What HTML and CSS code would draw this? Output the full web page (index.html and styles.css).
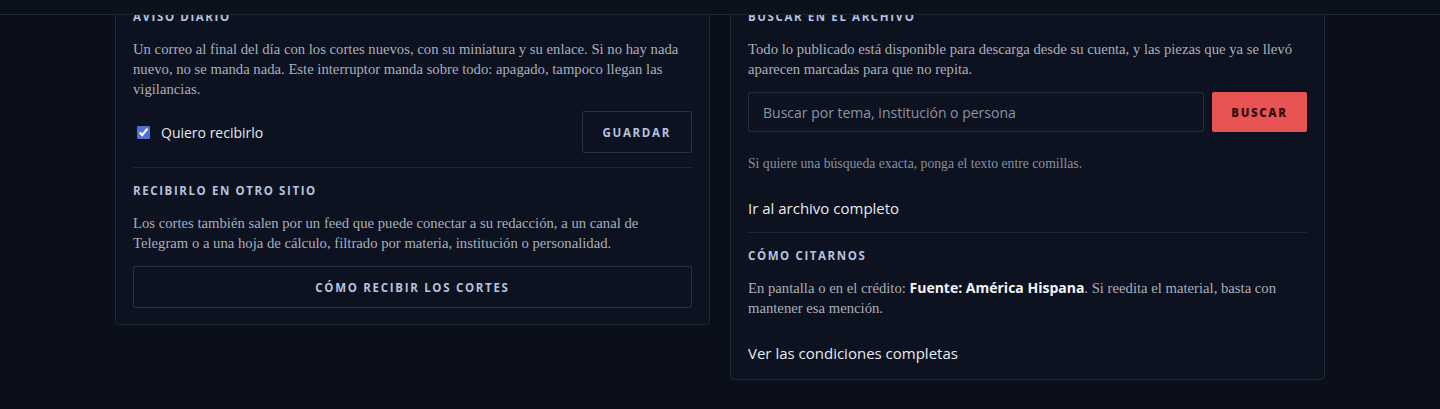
FILE: index.html
```html
<!DOCTYPE html>
<html lang="es">
<head>
    <meta charset="UTF-8">
    <meta name="viewport" content="width=device-width, initial-scale=1.0">
    <title>Su cuenta</title>
    <link rel="stylesheet" href="styles.css">
</head>
<body>

    <header class="topbar"></header>

    <main class="panels">
        <section class="panel">
            <h3 class="panel-title">Aviso diario</h3>
            <p class="panel-text">Un correo al final del día con los cortes nuevos, con su miniatura y su enlace. Si no hay nada nuevo, no se manda nada. Este interruptor manda sobre todo: apagado, tampoco llegan las vigilancias.</p>
            <form class="digest-row">
                <label class="check">
                    <input type="checkbox" checked>
                    <span>Quiero recibirlo</span>
                </label>
                <button type="button" class="btn-outline">Guardar</button>
            </form>

            <hr class="divider">

            <h3 class="panel-title">Recibirlo en otro sitio</h3>
            <p class="panel-text">Los cortes también salen por un feed que puede conectar a su redacción, a un canal de Telegram o a una hoja de cálculo, filtrado por materia, institución o personalidad.</p>
            <a href="#" class="btn-outline btn-block">Cómo recibir los cortes</a>
        </section>

        <section class="panel">
            <h3 class="panel-title">Buscar en el archivo</h3>
            <p class="panel-text">Todo lo publicado está disponible para descarga desde su cuenta, y las piezas que ya se llevó aparecen marcadas para que no repita.</p>
            <form class="search-row">
                <input type="text" class="search-input" placeholder="Buscar por tema, institución o persona">
                <button type="button" class="btn-red">Buscar</button>
            </form>
            <p class="hint">Si quiere una búsqueda exacta, ponga el texto entre comillas.</p>
            <a href="#" class="more-link">Ir al archivo completo</a>

            <hr class="divider">

            <h3 class="panel-title">Cómo citarnos</h3>
            <p class="panel-text">En pantalla o en el crédito: <strong>Fuente: América Hispana</strong>. Si reedita el material, basta con mantener esa mención.</p>
            <a href="#" class="more-link">Ver las condiciones completas</a>
        </section>
    </main>

</body>
</html>
```

FILE: styles.css
```css
body {
    margin: 0;
    background-color: #0a0f1a;
    color: #e6e9ef;
    font-family: "Open Sans", sans-serif;
}

/* sticky bar, the page below it is scrolled */
.topbar {
    position: fixed;
    top: 0;
    left: 0;
    right: 0;
    height: 14px;
    background-color: #0c111b;
    border-bottom: 1px solid #1c2431;
    z-index: 10;
}

.panels {
    width: 1210px;
    margin: -9px auto 0;
    display: grid;
    grid-template-columns: 1fr 1fr;
    gap: 20px;
    align-items: start;
}

.panel {
    background-color: #0c1220;
    border: 1px solid #1f2836;
    border-radius: 4px;
    padding: 17px 17px 16px;
    display: flex;
    flex-direction: column;
}

.panel-title {
    margin: 0;
    font-size: 11.5px;
    line-height: 16px;
    font-weight: 700;
    letter-spacing: 1.6px;
    text-transform: uppercase;
    color: #b7c2de;
}

.panel-text {
    margin: 14px 0 0;
    font-family: "Liberation Serif", serif;
    font-size: 14.7px;
    line-height: 20px;
    color: #a9afbb;
}

.panel-text strong {
    font-family: "Open Sans", sans-serif;
    font-size: 14px;
    font-weight: 700;
    color: #f2f4f8;
}

.digest-row {
    margin-top: 12px;
    display: flex;
    justify-content: space-between;
    align-items: center;
}

.check {
    display: flex;
    align-items: center;
    gap: 11px;
    padding-left: 4px;
    font-size: 14px;
    color: #e6e9ef;
}

.check input {
    margin: 0;
    width: 13px;
    height: 13px;
    accent-color: #4f6fd8;
}

.btn-outline {
    box-sizing: border-box;
    height: 42px;
    padding: 0 20px;
    background: transparent;
    border: 1px solid #283142;
    border-radius: 2px;
    color: #b7c2de;
    font-family: "Open Sans", sans-serif;
    font-size: 11.5px;
    font-weight: 700;
    letter-spacing: 1.7px;
    text-transform: uppercase;
    text-decoration: none;
    display: flex;
    align-items: center;
    justify-content: center;
}

.btn-block {
    margin-top: 13px;
    width: 100%;
}

.divider {
    margin: 14px 0 15px;
    border: 0;
    border-top: 1px solid #1f2836;
}

.search-row {
    margin-top: 13px;
    display: flex;
    gap: 8px;
}

.search-input {
    flex: 1;
    box-sizing: border-box;
    height: 40px;
    padding: 0 14px;
    background: transparent;
    border: 1px solid #232c3b;
    border-radius: 2px;
    color: #e6e9ef;
    font-family: "Open Sans", sans-serif;
    font-size: 14px;
}

.search-input::placeholder {
    color: #8d94a2;
}

.btn-red {
    width: 95px;
    height: 40px;
    background-color: #e85454;
    border: 0;
    border-radius: 2px;
    color: #3a0c12;
    font-family: "Open Sans", sans-serif;
    font-size: 11.5px;
    font-weight: 800;
    letter-spacing: 1.6px;
    text-transform: uppercase;
}

.hint {
    margin: 23px 0 0;
    font-family: "Liberation Serif", serif;
    font-size: 13.7px;
    line-height: 18px;
    color: #8a919e;
}

.more-link {
    margin-top: 25px;
    font-size: 15px;
    line-height: 20px;
    color: #e8ebf0;
    text-decoration: none;
}
```
